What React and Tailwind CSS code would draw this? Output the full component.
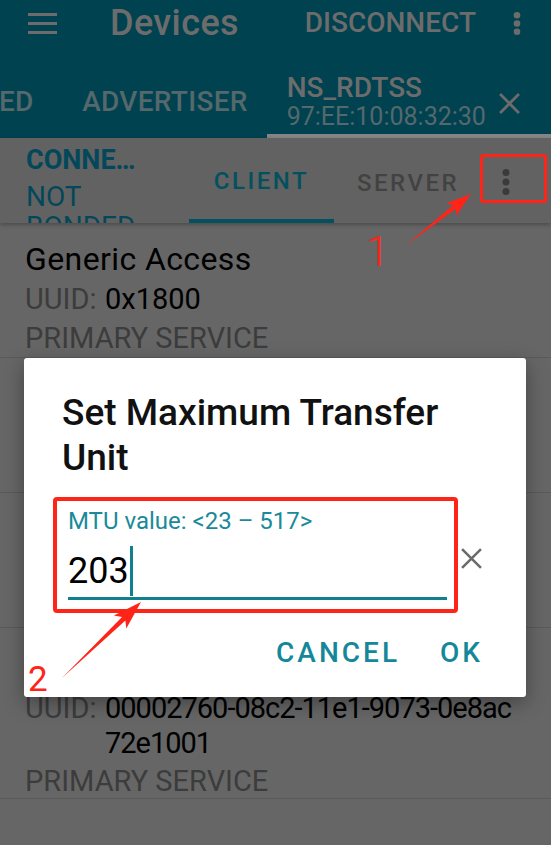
import React from "react";

function arrowPoints(tx, ty, px, py, h = 22, wb = 9, w1 = 2.4, back = 5) {
  const dx = px - tx;
  const dy = py - ty;
  const L = Math.hypot(dx, dy);
  const ux = dx / L;
  const uy = dy / L;
  const nx = -uy;
  const ny = ux;
  const bx = px - ux * h;
  const by = py - uy * h;
  const pts = [
    [tx, ty],
    [bx + nx * w1, by + ny * w1],
    [bx - ux * back + nx * wb, by - uy * back + ny * wb],
    [px, py],
    [bx - ux * back - nx * wb, by - uy * back - ny * wb],
    [bx - nx * w1, by - ny * w1],
  ];
  return pts.map((p) => p.map((v) => v.toFixed(1)).join(",")).join(" ");
}

function Dots({ color, r = 3.4, gap = 9.5 }) {
  return (
    <svg width="10" height={gap * 2 + r * 2 + 2} viewBox={`0 0 10 ${gap * 2 + r * 2 + 2}`}>
      <circle cx="5" cy={r + 1} r={r} fill={color} />
      <circle cx="5" cy={r + 1 + gap} r={r} fill={color} />
      <circle cx="5" cy={r + 1 + gap * 2} r={r} fill={color} />
    </svg>
  );
}

function XIcon({ size, color, stroke }) {
  return (
    <svg width={size} height={size} viewBox="0 0 20 20">
      <path d="M1 1L19 19M19 1L1 19" stroke={color} strokeWidth={stroke} />
    </svg>
  );
}

function Service({ name, uuid, uuid2 }) {
  if (uuid2) {
    return (
      <div className="border-b border-[#5a5a5a] pl-[25px] pt-[16px]">
        <div className="text-[32px] leading-[40px] tracking-[0.4px] text-black">{name}</div>
        <div className="mt-[7px] flex text-[29px] leading-[35px] whitespace-nowrap">
          <span className="w-[80px] shrink-0 text-[#3c3c3c]">UUID:</span>
          <span className="tracking-[-1px] text-black">
            {uuid}
            <br />
            {uuid2}
          </span>
        </div>
        <div className="mt-[4px] text-[29px] leading-[33px] text-[#3c3c3c]">PRIMARY SERVICE</div>
      </div>
    );
  }
  return (
    <div className="border-b border-[#5a5a5a] pl-[25px] pt-[16px]">
      <div className="text-[32px] leading-[40px] tracking-[0.4px] text-black">{name}</div>
      <div className="flex text-[29px] leading-[40px] whitespace-nowrap">
        <span className="w-[80px] shrink-0 text-[#3c3c3c]">UUID:</span>
        <span className="text-black">{uuid}</span>
      </div>
      <div className="text-[29px] leading-[38px] text-[#3c3c3c]">PRIMARY SERVICE</div>
    </div>
  );
}

export default function App() {
  return (
    <div className="relative h-[845px] w-[551px] overflow-hidden bg-[#666666] font-[Roboto,sans-serif]">
      {/* App bar */}
      <header className="bg-[#014250]">
        <div className="flex h-[46px] items-center">
          <svg className="ml-[28px]" width="29" height="21" viewBox="0 0 29 21">
            <rect x="0" y="0" width="29" height="3" fill="#6c6c6c" />
            <rect x="0" y="9" width="29" height="3" fill="#6c6c6c" />
            <rect x="0" y="18" width="29" height="3" fill="#6c6c6c" />
          </svg>
          <span className="ml-[53px] text-[36px] leading-[46px] tracking-[0.4px] font-medium text-[#6c6c6c]">Devices</span>
          <span className="ml-auto text-[28px] leading-[46px] font-medium text-[#6c6c6c]">DISCONNECT</span>
          <div className="ml-[36px] mr-[29px] flex items-center">
            <Dots color="#6c6c6c" r={3.3} gap={8.2} />
          </div>
        </div>
        <div className="flex h-[92px] overflow-hidden">
          <div className="-ml-[129px] flex items-center pt-[24px] pb-[4px] pr-[24px] text-[28px] font-medium text-[#55686c]">
            CONNECTED
          </div>
          <div className="flex items-center pt-[24px] pb-[4px] pl-[25px] pr-[19px] text-[28px] font-medium tracking-[0.3px] text-[#55686c]">
            ADVERTISER
          </div>
          <div className="flex flex-1 items-center border-b-4 border-[#858585] pt-[24px] pl-[20px]">
            <div className="flex flex-col">
              <span className="text-[28px] leading-[30px] font-medium text-[#6c6c6c]">NS_RDTSS</span>
              <span className="text-[25px] leading-[28px] text-[#55686c]">97:EE:10:08:32:30</span>
            </div>
            <div className="ml-[13px] mt-[2px]">
              <XIcon size={21} color="#6c6c6c" stroke={2.6} />
            </div>
          </div>
        </div>
      </header>

      {/* Sub bar */}
      <div className="relative z-10 flex h-[85px] bg-[#626262] shadow-[0_2px_4px_rgba(0,0,0,0.25)]">
        <div className="w-[189px] overflow-hidden pl-[26px] text-[#03485a]">
          <div className="text-[27px] leading-[44px] font-bold">CONNE…</div>
          <div className="text-[28px] leading-[30px]">NOT</div>
          <div className="text-[28px] leading-[30px]">BONDED</div>
        </div>
        <div className="flex w-[145px] items-center justify-center border-b-4 border-[#03505e] pt-[4px] text-[24px] font-medium tracking-[2.5px] text-[#03505e]">
          CLIENT
        </div>
        <div className="flex w-[148px] items-center justify-center pt-[4px] text-[24px] font-medium tracking-[2.5px] text-[#424242]">
          SERVER
        </div>
        <div className="flex w-[48px] items-center justify-center pt-[2px]">
          <Dots color="#3a3a3a" r={3.5} gap={9.5} />
        </div>
      </div>

      {/* Services list */}
      <div className="flex flex-col">
        <Service name="Generic Access" uuid="0x1800" />
        <Service name="Generic Attribute" uuid="0x1801" />
        <Service name="Device Information" uuid="0x180A" />
        <Service name="Unknown Service" uuid="00002760-08c2-11e1-9073-0e8ac" uuid2="72e1001" />
      </div>

      {/* Dialog */}
      <div className="absolute left-[24px] top-[358px] z-20 h-[339px] w-[502px] rounded-[3px] bg-white shadow-[0_6px_20px_rgba(0,0,0,0.35)]">
        <div className="px-[38px] pt-[32px] text-[37px] leading-[45px] font-medium text-[#111111]">
          Set Maximum Transfer
          <br />
          Unit
        </div>
        <div className="mt-[27px] flex items-end pl-[44px]">
          <div className="w-[379px]">
            <div className="text-[24px] leading-[28px] text-[#1a8a9a]">MTU value: &lt;23 – 517&gt;</div>
            <div className="mt-[10px] flex h-[55px] items-center border-b-[3px] border-[#10808f]">
              <span className="text-[36px] leading-[48px] text-black">203</span>
              <span className="ml-[1px] h-[50px] w-[3px] bg-[#10808f]" />
            </div>
          </div>
          <div className="mb-[31px] ml-[14px]">
            <XIcon size={21} color="#6a6a6a" stroke={2.4} />
          </div>
        </div>
        <div className="mt-[35px] flex justify-end pr-[43px] text-[28px] leading-[36px] font-medium tracking-[3px] text-[#14889a]">
          <span>CANCEL</span>
          <span className="ml-[40px]">OK</span>
        </div>
      </div>

      {/* Annotations */}
      <div className="absolute left-[480px] top-[154px] z-30 h-[49px] w-[67px] rounded-[3px] border-[3.5px] border-[#ff2418]" />
      <div className="absolute left-[53px] top-[497px] z-30 h-[116px] w-[405px] rounded-[4px] border-4 border-[#ff2418]" />
      <svg className="absolute left-0 top-0 z-30" width="551" height="845" viewBox="0 0 551 845">
        <polygon points={arrowPoints(405, 246, 471, 194, 21, 8, 2.2, 4)} fill="#ff2418" />
        <polygon points={arrowPoints(62, 678, 141, 602, 24, 9, 2.4, 5)} fill="#ff2418" />
      </svg>
      <span className="absolute left-[366px] top-[228px] z-30 text-[42px] leading-[48px] font-light text-[#ff2418]">1</span>
      <span className="absolute left-[28px] top-[660px] z-30 text-[35px] leading-[40px] text-[#ff2418]">2</span>
    </div>
  );
}
